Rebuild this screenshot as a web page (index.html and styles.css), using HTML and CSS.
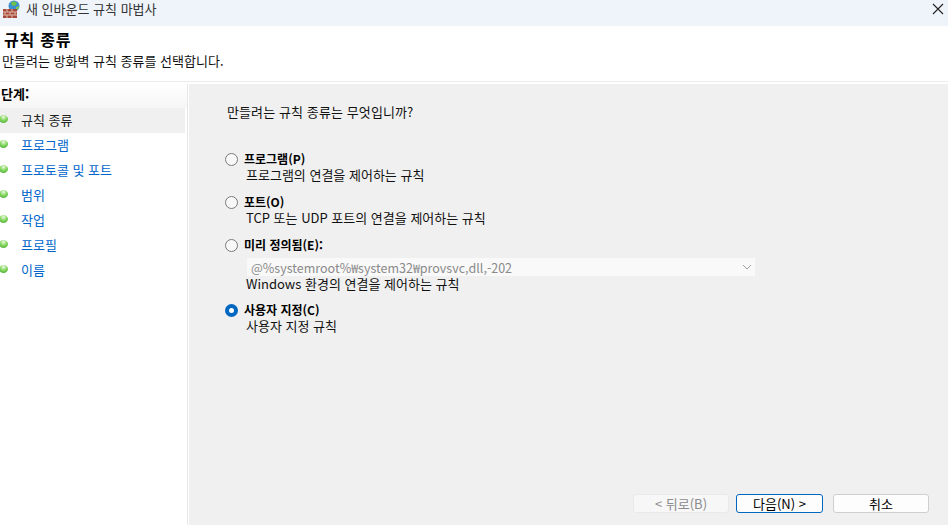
FILE: index.html
```html
<!DOCTYPE html>
<html lang="ko">
  <head>
    <meta charset="UTF-8" />
    <title>새 인바운드 규칙 마법사</title>
    <link rel="stylesheet" href="styles.css">
  </head>
  <body>
    <!-- Title bar -->
    <div class="titlebar">
      <svg class="app-icon" width="17" height="18" viewBox="0 0 17 18">
        <circle cx="11" cy="6" r="5.500" fill="#3a8fd0" />
        <path d="M8 2.500c2-1.500 5-1 6 .5l-2 3-3-.5z" fill="#6fbf4a" />
        <path d="M13 7l3-1c0 2-1 4-3 4.500z" fill="#7cc653" />
        <rect x="0" y="9" width="14" height="9" fill="#a5493a" />
        <path d="M0 12h14M0 15h14M4 9v3M9 9v3M2 12v3M7 12v3M12 12v3M4 15v3M9 15v3" stroke="#e0b8a8" stroke-width="1" fill="none" />
      </svg>
      <span class="title-text">새 인바운드 규칙 마법사</span>
      <svg class="close-icon" width="12" height="12" viewBox="0 0 12 12">
        <path d="M1 1l10 10M11 1L1 11" stroke="#222" stroke-width="1.100" fill="none" />
      </svg>
    </div>

    <!-- Header -->
    <div class="header">
      <h1>규칙 종류</h1>
      <p>만들려는 방화벽 규칙 종류를 선택합니다.</p>
    </div>

    <div class="main">
      <!-- Steps -->
      <div class="sidebar">
        <div class="steps-title">단계:</div>
        <ul class="steps">
          <li class="step step-current"><span class="dot"></span>규칙 종류</li>
          <li class="step"><span class="dot"></span>프로그램</li>
          <li class="step"><span class="dot"></span>프로토콜 및 포트</li>
          <li class="step"><span class="dot"></span>범위</li>
          <li class="step"><span class="dot"></span>작업</li>
          <li class="step"><span class="dot"></span>프로필</li>
          <li class="step"><span class="dot"></span>이름</li>
        </ul>
      </div>

      <!-- Content -->
      <div class="content">
        <div class="question">만들려는 규칙 종류는 무엇입니까?</div>

        <div class="options">
          <div class="option">
            <div class="option-label"><span class="radio"></span><strong>프로그램(P)</strong></div>
            <div class="option-desc">프로그램의 연결을 제어하는 규칙</div>
          </div>
          <div class="option">
            <div class="option-label"><span class="radio"></span><strong>포트(O)</strong></div>
            <div class="option-desc">TCP 또는 UDP 포트의 연결을 제어하는 규칙</div>
          </div>
          <div class="option option-predefined">
            <div class="option-label"><span class="radio"></span><strong>미리 정의됨(E):</strong></div>
            <div class="select">
              <span>@%systemroot%₩system32₩provsvc,dll,-202</span>
              <svg width="10" height="6" viewBox="0 0 10 6">
                <path d="M1 1l4 4 4-4" stroke="#a0a0a0" stroke-width="1" fill="none" />
              </svg>
            </div>
            <div class="option-desc">Windows 환경의 연결을 제어하는 규칙</div>
          </div>
          <div class="option">
            <div class="option-label"><span class="radio radio-on"></span><strong>사용자 지정(C)</strong></div>
            <div class="option-desc">사용자 지정 규칙</div>
          </div>
        </div>

        <div class="buttons">
          <button class="btn btn-disabled">&lt; 뒤로(B)</button>
          <button class="btn btn-default">다음(N) &gt;</button>
          <button class="btn btn-cancel">취소</button>
        </div>
      </div>
    </div>
  </body>
</html>
```

FILE: styles.css
```css
html,
body {
  height: 100%;
}
body {
  margin: 0;
  display: flex;
  flex-direction: column;
  overflow: hidden;
  font-family: "Noto Sans CJK KR", "Liberation Sans", sans-serif;
  font-size: 13px;
  color: #111;
  background-color: #fff;
}
.titlebar {
  display: flex;
  align-items: center;
  height: 26px;
  flex-shrink: 0;
  padding: 0 4px 8px 3px;
  box-sizing: border-box;
  background-color: #eff3fa;
}
.app-icon {
  margin-right: 6px;
}
.title-text {
  flex: 1;
  color: #333;
  line-height: 16px;
}
.header {
  height: 56px;
  flex-shrink: 0;
  margin-bottom: 2px;
  padding-left: 4px;
  box-sizing: border-box;
  border-bottom: 1px solid #ececec;
}
.header h1 {
  margin: 0;
  padding-top: 3px;
  font-size: 16px;
  line-height: 21px;
  font-weight: bold;
  color: #000;
  letter-spacing: 0.8px;
}
.header p {
  margin: 0 0 0 -2px;
  padding-top: 2px;
  line-height: 18px;
}
.main {
  display: flex;
  flex: 1;
  min-height: 0;
}
.sidebar {
  width: 188px;
  flex-shrink: 0;
  box-sizing: border-box;
  border-right: 1px solid #e6e6e6;
}
.steps-title {
  height: 24px;
  padding-left: 1px;
  font-weight: bold;
  line-height: 20px;
  color: #000;
  background: linear-gradient(#fff, #f6f6f6);
}
.steps {
  margin: 0;
  padding: 0;
  list-style: none;
}
.step {
  display: flex;
  align-items: center;
  height: 25px;
  width: 185px;
  padding-bottom: 3px;
  box-sizing: border-box;
  color: #0066cc;
}
.step-current {
  color: #222;
  background-color: #f0f0f0;
}
.dot {
  width: 9px;
  height: 8px;
  margin-left: -1px;
  margin-right: 13px;
  border-radius: 50%;
  flex-shrink: 0;
  background: radial-gradient(circle at 50% 25%, #eef9e6 0, #86d860 45%, #3c9f2a 100%);
}
.content {
  flex: 1;
  display: flex;
  flex-direction: column;
  margin-left: 1px;
  padding-left: 38px;
  background-color: #f0f0f0;
}
.question {
  padding-top: 19px;
  line-height: 18px;
  letter-spacing: 0.1px;
}
.options {
  flex: 1;
  margin-left: -2px;
  padding-top: 30px;
}
.option {
  margin-bottom: 11px;
}
.option-predefined {
  margin-bottom: 10px;
}
.option-label {
  display: flex;
  align-items: center;
  height: 16px;
  font-size: 12px;
  line-height: 16px;
  color: #000;
}
.radio {
  width: 13px;
  height: 13px;
  margin-right: 6px;
  box-sizing: border-box;
  border: 1px solid #7a7a7a;
  border-radius: 50%;
  background-color: #f8f8f8;
}
.radio-on {
  border: 4px solid #0067c0;
  background-color: #fff;
}
.option-desc {
  padding-left: 21px;
  line-height: 16px;
}
.select {
  display: flex;
  align-items: center;
  justify-content: space-between;
  width: 508px;
  height: 18px;
  margin: 5px 0 0 22px;
  padding: 0 3px 0 4px;
  box-sizing: border-box;
  font-size: 12.5px;
  color: #8a8a8a;
  background-color: #f9f9f9;
}
.buttons {
  display: flex;
  justify-content: flex-end;
  padding: 0 19px 12px 0;
}
.btn {
  height: 19px;
  padding: 0;
  font-family: inherit;
  font-size: 13px;
  line-height: 15px;
  border-radius: 3px;
  background-color: #fdfdfd;
  box-sizing: border-box;
}
.btn-disabled {
  width: 96px;
  color: #8c8c8c;
  border: 1px solid #eaeaea;
  background-color: #f7f7f7;
}
.btn-default {
  width: 87px;
  margin-left: 7px;
  color: #000;
  border: 1px solid #0067c0;
}
.btn-cancel {
  width: 96px;
  margin-left: 10px;
  color: #000;
  border: 1px solid #cfcfcf;
}
```
